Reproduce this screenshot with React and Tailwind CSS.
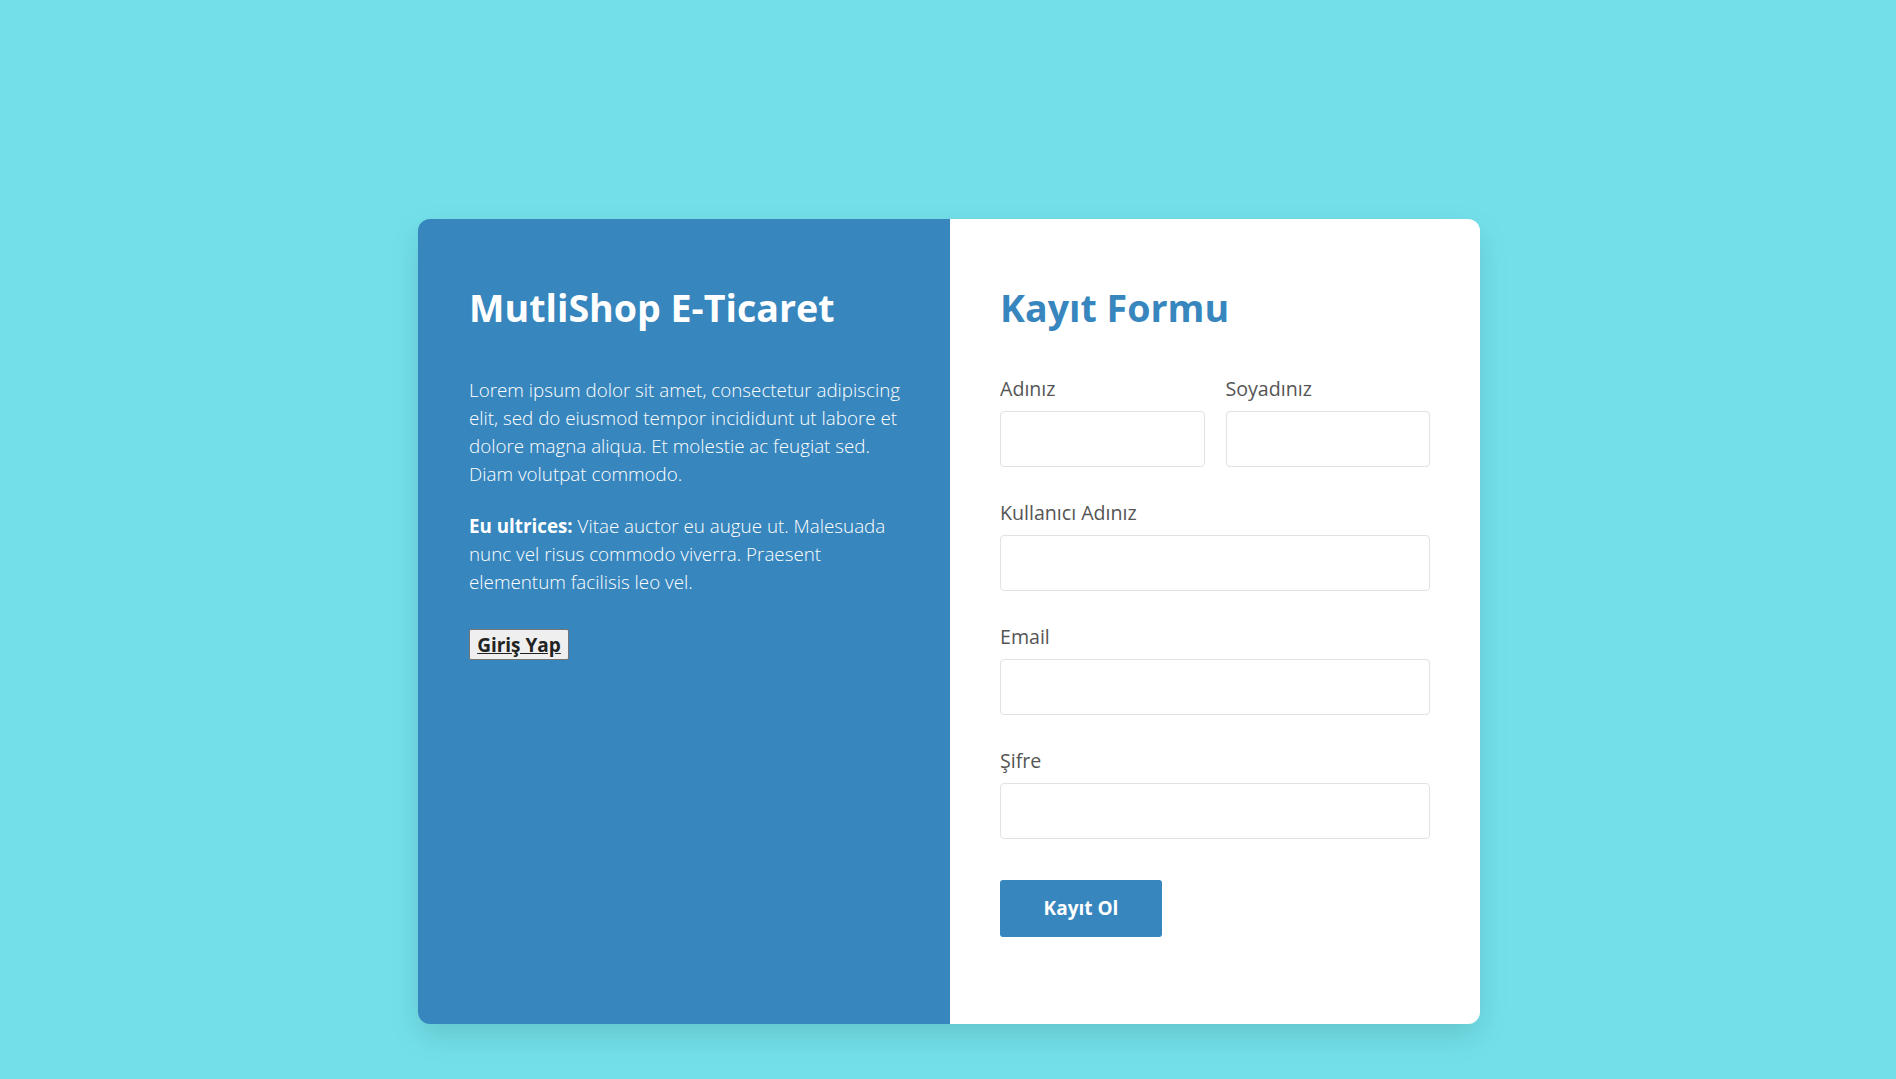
import React from 'react';

function Field({ label, className = '' }) {
  return (
    <div className={className}>
      <label className="block text-[19.6px] font-medium leading-[28px] text-[#555555]">{label}</label>
      <input
        type="text"
        className="mt-[8px] block h-[56px] w-full rounded-[4px] border border-[#e2e2e2] bg-white px-3 outline-none"
      />
    </div>
  );
}

export default function App() {
  return (
    <div
      className="min-h-screen bg-[#73e0e9] pl-[2px] pt-[219px]"
      style={{ fontFamily: '"Open Sans", "Noto Sans", sans-serif' }}
    >
      <div className="mx-auto flex h-[805px] w-[1062px] overflow-hidden rounded-[12px] shadow-[0_12px_30px_rgba(0,0,0,0.12)]">
        {/* left info panel */}
        <div className="w-[532px] bg-[#3786be] pl-[51px] pr-[44px] pt-[66px] text-white">
          <h2 className="text-[37.6px] font-bold leading-[45px]">MutliShop E-Ticaret</h2>
          <p className="mt-[46px] text-[18.8px] font-light leading-[28px]">
            Lorem ipsum dolor sit amet, consectetur adipiscing elit, sed do eiusmod tempor incididunt ut labore et
            dolore magna aliqua. Et molestie ac feugiat sed. Diam volutpat commodo.
          </p>
          <p className="mt-[24px] text-[18.8px] font-light leading-[28px]">
            <strong className="font-bold">Eu ultrices:</strong> Vitae auctor eu augue ut. Malesuada nunc vel risus
            commodo viverra. Praesent elementum facilisis leo vel.
          </p>
          <button
            type="button"
            className="mt-[33px] flex h-[31px] w-[100px] items-center justify-center rounded-[2px] border border-[#767676] bg-[#efefef]"
          >
            <a href="#" className="text-[19px] font-bold leading-[24px] text-[#222222] underline">
              Giriş Yap
            </a>
          </button>
        </div>

        {/* register form */}
        <div className="w-[530px] bg-white px-[50px] pt-[66px]">
          <h2 className="text-[37.6px] font-bold leading-[45px] text-[#3786be]">Kayıt Formu</h2>
          <form className="mt-[45px]" onSubmit={(e) => e.preventDefault()}>
            <div className="flex gap-[21px]">
              <Field label="Adınız" className="flex-1" />
              <Field label="Soyadınız" className="flex-1" />
            </div>
            <Field label="Kullanıcı Adınız" className="mt-[32px]" />
            <Field label="Email" className="mt-[32px]" />
            <Field label="Şifre" className="mt-[32px]" />
            <button
              type="submit"
              className="mt-[41px] h-[57px] w-[162px] rounded-[3px] bg-[#3786be] text-[19px] font-bold text-white"
            >
              Kayıt Ol
            </button>
          </form>
        </div>
      </div>
    </div>
  );
}
